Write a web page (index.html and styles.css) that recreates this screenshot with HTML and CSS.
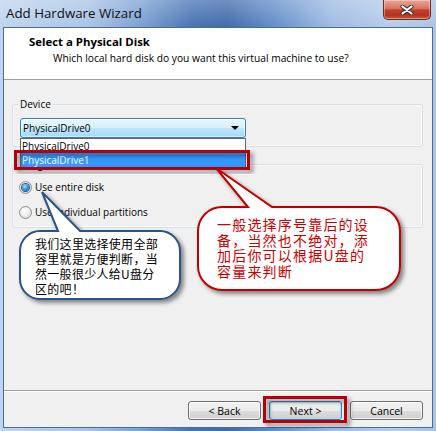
FILE: index.html
```html
<!DOCTYPE html>
<html lang="zh-CN">

<head>
  <meta charset="UTF-8">
  <title>Add Hardware Wizard</title>
  <link rel="stylesheet" href="styles.css">
</head>

<body>

  <div class="window">
    <div class="titlebar">
      <span class="caption">Add Hardware Wizard</span>
      <div class="close-btn">
        <svg viewBox="0 0 14 10" width="14" height="10">
          <path d="M2.5 1.5 L11.5 8.5 M11.5 1.5 L2.5 8.5" stroke="#3b2626" stroke-width="4" stroke-linecap="round" />
          <path d="M2.5 1.5 L11.5 8.5 M11.5 1.5 L2.5 8.5" stroke="#fff" stroke-width="2.2" stroke-linecap="round" />
        </svg>
      </div>
    </div>

    <div class="client">
      <div class="header">
        <div class="header-title">Select a Physical Disk</div>
        <div class="header-sub">Which local hard disk do you want this virtual machine to use?</div>
      </div>

      <div class="content">
        <div class="group group-device">
          <div class="legend">Device</div>
          <div class="combo">
            <span>PhysicalDrive0</span>
            <span class="combo-arrow"></span>
          </div>
        </div>

        <div class="group group-usage">
          <div class="legend">Usage</div>
          <label class="radio"><span class="radio-dot checked"></span>Use entire disk</label>
          <label class="radio"><span class="radio-dot"></span>Use individual partitions</label>
        </div>
      </div>

      <div class="footer">
        <button class="btn">&lt; Back</button>
        <button class="btn btn-default">Next &gt;</button>
        <button class="btn">Cancel</button>
      </div>
    </div>

    <!-- 열린 콤보 목록 -->
    <ul class="droplist">
      <li>PhysicalDrive0</li>
      <li class="selected">PhysicalDrive1</li>
    </ul>

    <!-- 빨간 테두리 + 말풍선 -->
    <svg class="marks" viewBox="0 0 436 431" width="436" height="431">
      <defs>
        <filter id="shadow" x="-20%" y="-20%" width="140%" height="150%">
          <feDropShadow dx="3" dy="3" stdDeviation="2" flood-color="#000" flood-opacity="0.45" />
        </filter>
      </defs>
      <rect x="15.5" y="151.5" width="233" height="17" fill="none" stroke="#b4000f" stroke-width="3" filter="url(#shadow)" />
      <rect x="264.5" y="397.5" width="81" height="24" fill="none" stroke="#b4000f" stroke-width="3" filter="url(#shadow)" />

      <path d="M 40 231 L 58 231 L 42 192 L 80 231 L 160 231 A 20 20 0 0 1 180 251 L 180 279 A 20 20 0 0 1 160 299
               L 40 299 A 20 20 0 0 1 20 279 L 20 251 A 20 20 0 0 1 40 231 Z"
        fill="#fff" stroke="#2c5286" stroke-width="2" filter="url(#shadow)" />

      <path d="M 222 207 L 248 207 L 216 168 L 272 207 L 376 207 A 24 24 0 0 1 400 231 L 400 266 A 24 24 0 0 1 376 290
               L 222 290 A 24 24 0 0 1 198 266 L 198 231 A 24 24 0 0 1 222 207 Z"
        fill="#fff" stroke="#c00000" stroke-width="2" filter="url(#shadow)" />
    </svg>

    <div class="note note-blue">我们这里选择使用全部<br>容里就是方便判断，当<br>然一般很少人给U盘分<br>区的吧！</div>
    <div class="note note-red">一般选择序号靠后的设<br>备，当然也不绝对，添<br>加后你可以根据U盘的<br>容量来判断</div>
  </div>

</body>

</html>
```

FILE: styles.css
```css
* {
  box-sizing: border-box;
}

html,
body {
  margin: 0;
  background: #fff;
}

body {
  font-family: "Open Sans", "Liberation Sans", sans-serif;
  font-size: 10px;
  color: #000;
}

.window {
  position: relative;
  width: 436px;
  height: 431px;
  display: flex;
  flex-direction: column;
  overflow: hidden;
  background:
    linear-gradient(180deg, rgba(255, 255, 255, 0.25), rgba(255, 255, 255, 0) 28px),
    linear-gradient(90deg, #c0d5ee 0%, #a9c4e6 20%, #7ca1d3 32%, #4673b3 44%, #3e6aab 52%, #5f8bc7 62%, #9dbbe3 76%, #b6cdea 90%, #a9c3e5 100%);
}

.titlebar {
  height: 28px;
  flex: none;
  display: flex;
  justify-content: space-between;
  align-items: flex-start;
  padding-left: 6px;
}

.caption {
  font-size: 13.3px;
  line-height: 27px;
  color: #111;
}

.close-btn {
  width: 48px;
  height: 20px;
  margin-right: 5px;
  display: flex;
  align-items: center;
  justify-content: center;
  border: 1px solid #6e2b22;
  border-top: none;
  border-radius: 0 0 5px 5px;
  background: linear-gradient(180deg, #e8a698 0%, #d77563 45%, #c3402d 52%, #b23420 80%, #c95c40 100%);
  box-shadow: inset 0 0 0 1px rgba(255, 255, 255, 0.35);
}

.client {
  flex: 1;
  margin: 0 4px 4px;
  display: flex;
  flex-direction: column;
  background: #f0f0f0;
  box-shadow: 0 0 0 1px #4f6b93;
}

.header {
  height: 52px;
  flex: none;
  background: #fff;
  border-bottom: 1px solid #a0a0a0;
  padding: 7px 0 0 25px;
}

.header-title {
  font-size: 11.4px;
  font-weight: bold;
  line-height: 14px;
}

.header-sub {
  margin: 2px 0 0 24px;
  font-size: 10.25px;
  line-height: 14px;
}

.content {
  flex: 1;
  padding: 0 9px 0 8px;
}

.group {
  border: 1px solid #d5dfe5;
  border-radius: 3px;
  box-shadow: inset 0 0 0 1px rgba(255, 255, 255, 0.6);
  padding: 0 8px 8px 6px;
}

.group-device {
  margin-top: 24px;
}

.group-usage {
  margin-top: 17px;
  padding-bottom: 7px;
}

.legend {
  width: fit-content;
  margin: -8px 0 0 -1px;
  padding: 0 2px;
  background: #f0f0f0;
  line-height: 15px;
}

.combo {
  width: 226px;
  height: 20px;
  margin: 6px 0 0 1px;
  padding: 0 6px 0 2px;
  display: flex;
  align-items: center;
  justify-content: space-between;
  border: 1px solid #3c7fb1;
  border-radius: 3px;
  background: linear-gradient(180deg, #eaf6fd 0%, #d9f0fc 50%, #bee6fd 51%, #a7d9f5 100%);
  box-shadow: inset 0 0 0 1px rgba(255, 255, 255, 0.5);
}

.combo-arrow {
  width: 0;
  height: 0;
  border-left: 4px solid transparent;
  border-right: 4px solid transparent;
  border-top: 4px solid #000;
}

.radio {
  display: flex;
  align-items: center;
  gap: 3px;
  line-height: 15px;
  margin-top: 8px;
}

.radio + .radio {
  margin-top: 10px;
}

.radio-dot {
  width: 13px;
  height: 13px;
  border-radius: 50%;
  border: 1px solid #8e8f8f;
  background: radial-gradient(circle at 40% 35%, #fff 0%, #f1f1f1 40%, #cfcfcf 100%);
  display: flex;
  align-items: center;
  justify-content: center;
}

.radio-dot.checked::after {
  content: "";
  width: 7px;
  height: 7px;
  border-radius: 50%;
  background: radial-gradient(circle at 40% 35%, #a9e4ff 0%, #3c9ad6 45%, #16508c 100%);
  box-shadow: 0 0 0 1px #1b5c96;
}

.footer {
  height: 37px;
  flex: none;
  display: flex;
  justify-content: flex-end;
  align-items: flex-start;
  gap: 8px;
  padding: 10px 9px 0 0;
  border-top: 1px solid #a0a0a0;
  box-shadow: inset 0 1px #fff;
}

.btn {
  width: 73px;
  height: 19px;
  padding: 0;
  font: inherit;
  font-size: 10.5px;
  color: #000;
  border: 1px solid #707070;
  border-radius: 3px;
  background: linear-gradient(180deg, #f2f2f2 0%, #ebebeb 50%, #dddddd 51%, #cfcfcf 100%);
  box-shadow: inset 0 0 0 1px rgba(255, 255, 255, 0.7);
}

.btn-default {
  border-color: #3c7fb1;
  box-shadow: inset 0 0 0 1px #a6e2f9;
}

.droplist {
  position: absolute;
  left: 20px;
  top: 138px;
  width: 226px;
  height: 31px;
  margin: 0;
  padding: 0;
  list-style: none;
  background: #fff;
  border: 1px solid #646464;
  line-height: 14px;
}

.droplist li {
  padding-left: 1px;
  height: 13px;
}

.droplist li.selected {
  height: 16px;
  line-height: 16px;
  background: #3399ff;
  color: #fff;
}

.marks {
  position: absolute;
  left: 0;
  top: 0;
}

.note {
  position: absolute;
  font-family: "Noto Sans CJK SC", sans-serif;
}

.note-blue {
  left: 35px;
  top: 236px;
  font-size: 12px;
  line-height: 15px;
  letter-spacing: 0.3px;
  color: #000;
}

.note-red {
  left: 217px;
  top: 217px;
  font-size: 14px;
  line-height: 15.6px;
  letter-spacing: 1.2px;
  color: #cc0000;
}
```
